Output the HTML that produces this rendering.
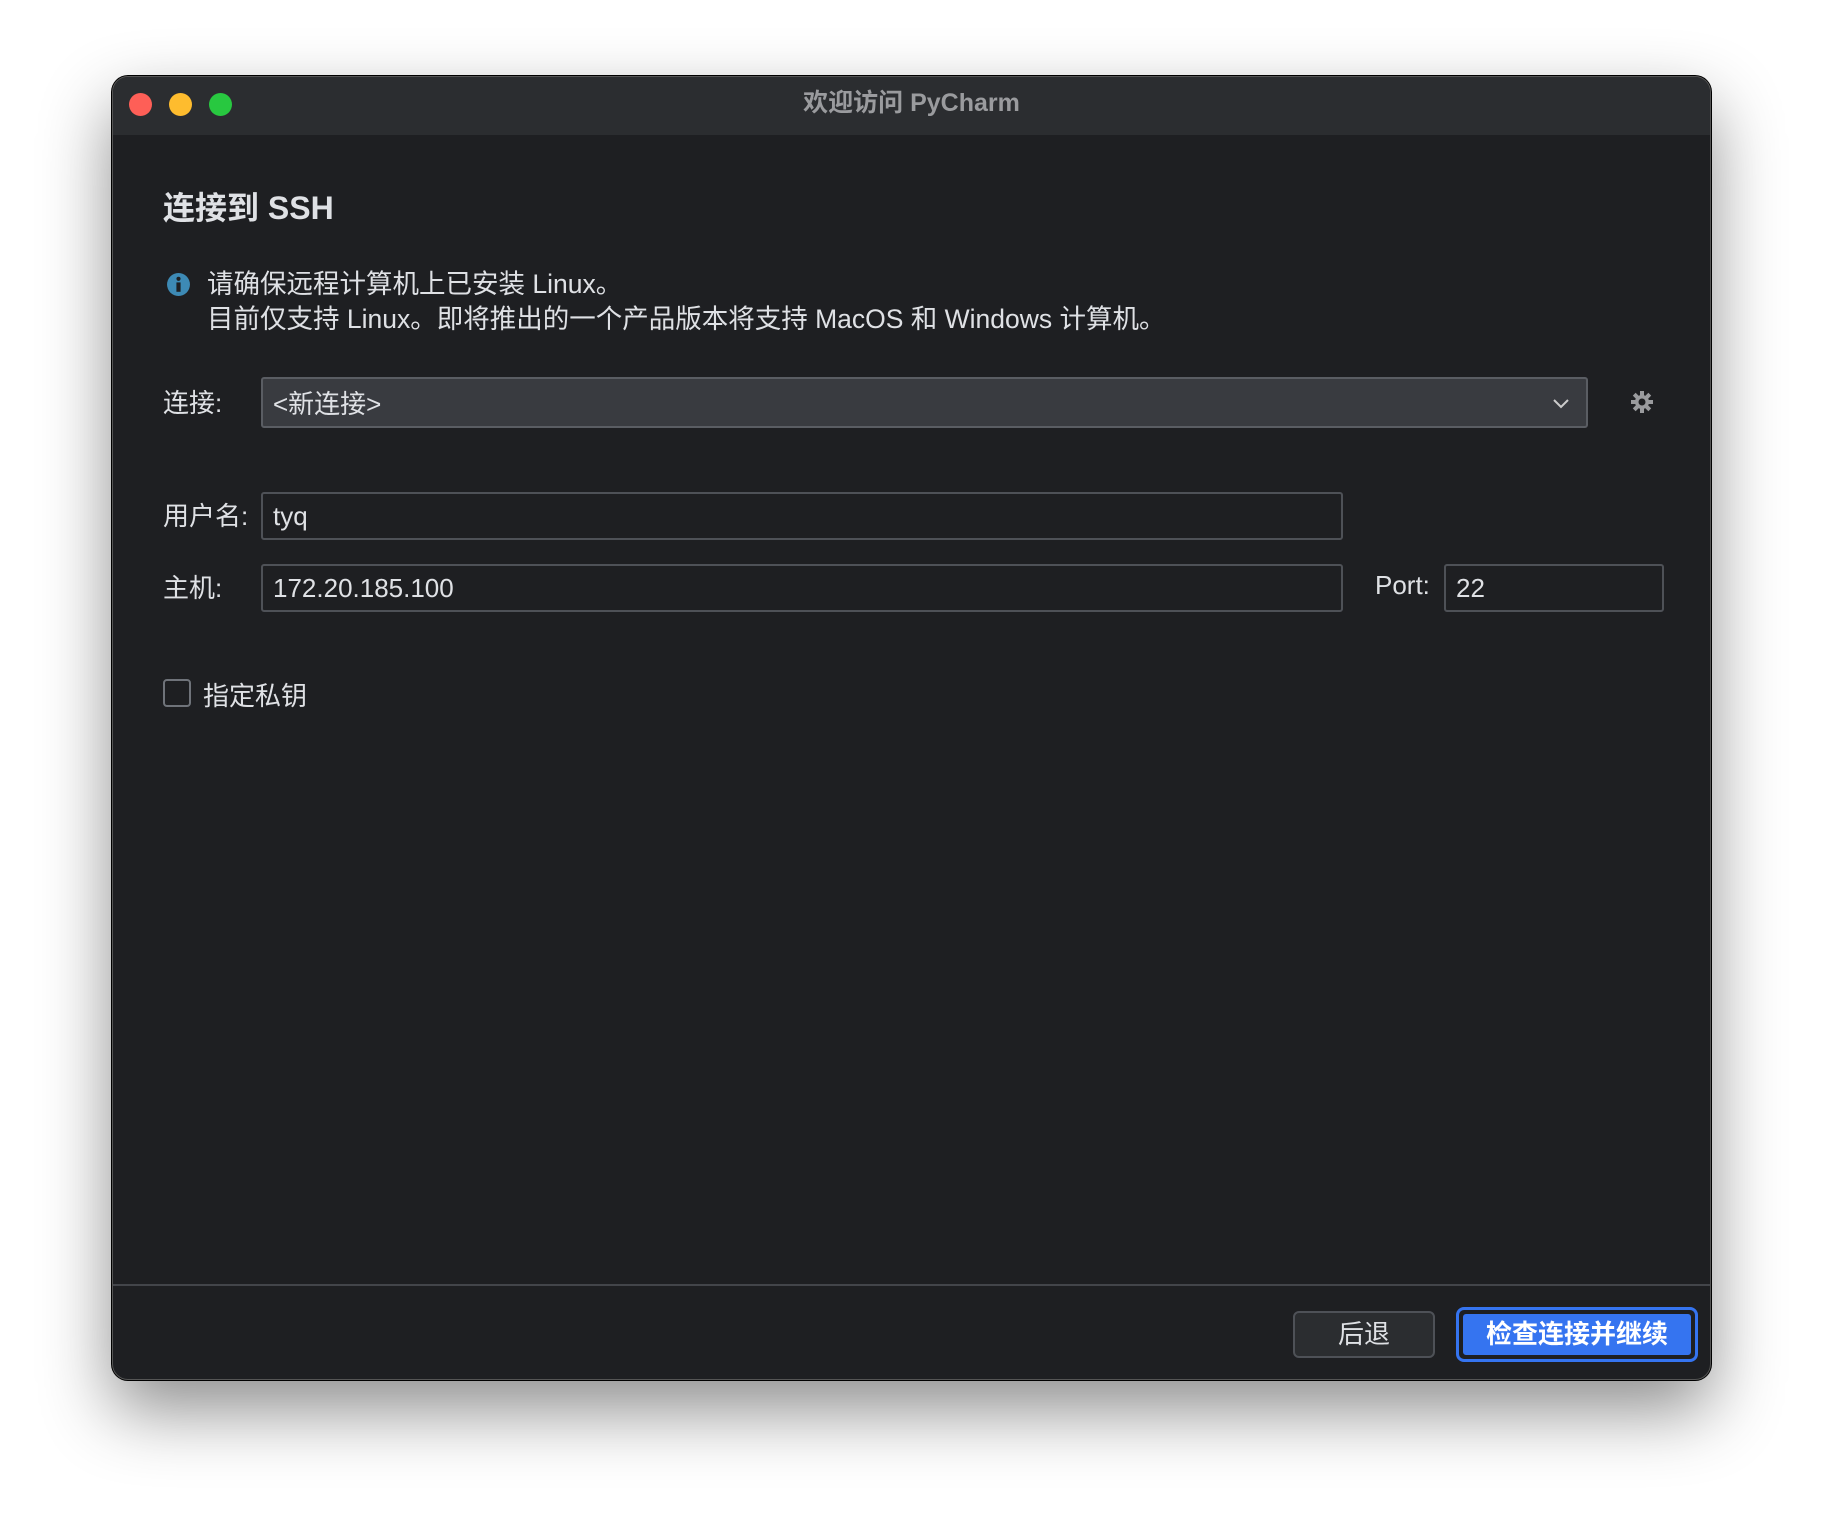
<!DOCTYPE html>
<html><head><meta charset="utf-8"><style>
*{margin:0;padding:0;box-sizing:border-box}
body{width:1824px;height:1530px;background:#fff;position:relative;overflow:hidden;font-family:"Liberation Sans","Noto Sans CJK SC",sans-serif;color:#dfe1e5}
.win{position:absolute;left:112px;top:76px;width:1599px;height:1304px;background:#1e1f22;border-radius:16px;border:1px solid #555;box-shadow:0 30px 70px rgba(0,0,0,.45),0 0 0 1px #000;overflow:hidden}
.tb{position:absolute;left:0;top:0;right:0;height:58px;background:#2b2d30}
.dot{position:absolute;top:16px;width:23px;height:23px;border-radius:50%}
.a{position:absolute;white-space:nowrap}
.f{position:absolute;background:#1e1f22;border:2px solid #4e5157;border-radius:3px;font-size:26px;padding-left:10px;display:flex;align-items:center}
</style></head><body>
<div class="win">
<div class="tb">
<div class="dot" style="left:16px;background:#fe5f57"></div>
<div class="dot" style="left:56px;background:#febc2e"></div>
<div class="dot" style="left:96px;background:#28c840"></div>
<div class="a" style="left:0;right:0;top:6px;text-align:center;font-size:25px;font-weight:bold;color:#9a9b9e">欢迎访问 PyCharm</div>
</div>
<div class="a" style="left:50px;top:106px;font-size:32px;font-weight:bold">连接到 SSH</div>
<svg class="a" style="left:53px;top:195px" width="25" height="25" viewBox="0 0 24 24"><circle cx="12" cy="12" r="11" fill="#3d8ab5"/><rect x="10" y="10" width="4" height="9" fill="#1e1f22"/><circle cx="12" cy="6.5" r="2" fill="#1e1f22"/></svg>
<div class="a" style="left:94px;top:190px;font-size:26.5px;line-height:35px">请确保远程计算机上已安装 Linux。<br>目前仅支持 Linux。即将推出的一个产品版本将支持 MacOS 和 Windows 计算机。</div>
<div class="a" style="left:50px;top:306px;font-size:26px">连接:</div>
<div class="f" style="left:148px;top:300px;width:1327px;height:51px;background:#393b40;border-color:#5a5d63">&lt;新连接&gt;
<svg style="position:absolute;right:16px;top:18px" width="18" height="12" viewBox="0 0 18 12"><path d="M2 3 L9 10 L16 3" stroke="#ccc" stroke-width="2" fill="none"/></svg></div>
<svg class="a" style="left:1517px;top:313px" width="24" height="24" viewBox="0 0 24 24"><g fill="#9a9b9e"><circle cx="12" cy="12" r="7"/><rect x="10" y="1" width="4" height="22"/><rect x="1" y="10" width="22" height="4"/><rect x="10" y="1" width="4" height="22" transform="rotate(45 12 12)"/><rect x="10" y="1" width="4" height="22" transform="rotate(-45 12 12)"/></g><circle cx="12" cy="12" r="3.5" fill="#1e1f22"/></svg>
<div class="a" style="left:50px;top:419px;font-size:26px">用户名:</div>
<div class="f" style="left:148px;top:415px;width:1082px;height:48px">tyq</div>
<div class="a" style="left:50px;top:491px;font-size:26px">主机:</div>
<div class="f" style="left:148px;top:487px;width:1082px;height:48px">172.20.185.100</div>
<div class="a" style="left:1262px;top:493px;font-size:26px">Port:</div>
<div class="f" style="left:1331px;top:487px;width:220px;height:48px">22</div>
<div class="a" style="left:50px;top:602px;width:28px;height:28px;border:2px solid #6f737a;border-radius:4px"></div>
<div class="a" style="left:90px;top:599px;font-size:26px">指定私钥</div>
<div class="a" style="left:0;right:0;top:1207px;height:2px;background:#43454a"></div>
<div class="a" style="left:1180px;top:1234px;width:142px;height:47px;border:2px solid #4e5157;border-radius:6px;background:#2b2d30;font-size:26px;text-align:center;line-height:43px">后退</div>
<div class="a" style="left:1343px;top:1230px;width:242px;height:55px;border:3px solid #3574f0;border-radius:8px;padding:2px"><div style="width:100%;height:100%;background:#3574f0;border:2px solid #1e1f22;border-radius:5px;color:#fff;font-size:26px;font-weight:bold;text-align:center;line-height:40px">检查连接并继续</div></div>
</div>
</body></html>
